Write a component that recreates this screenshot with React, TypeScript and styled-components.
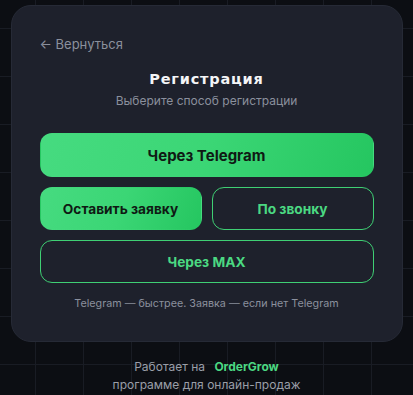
import styled, { createGlobalStyle } from "styled-components";

const GlobalStyle = createGlobalStyle`
  html, body {
    margin: 0;
    padding: 0;
    background-color: #0c0e13;
    background-image:
      linear-gradient(to right, #191c24 1px, transparent 1px),
      linear-gradient(to bottom, #191c24 1px, transparent 1px);
    background-size: 48px 48px;
    background-position: 35px 28px;
    font-family: Inter, "Noto Sans", sans-serif;
    min-height: 395px;
  }
`;

const Page = styled.div`
  display: flex;
  flex-direction: column;
  align-items: center;
  padding-top: 5px;
`;

const Card = styled.div`
  box-sizing: border-box;
  width: 392px;
  background: #1e212c;
  border: 1px solid #262a36;
  border-radius: 20px;
  padding: 30px 28px 30px 28px;
  display: flex;
  flex-direction: column;
`;

const Back = styled.a`
  color: #8b909d;
  font-size: 13px;
  text-decoration: none;
  line-height: 16px;
  align-self: flex-start;
`;

const Title = styled.h1`
  margin: 18px 0 0;
  text-align: center;
  color: #f4f5f7;
  font-family: "DejaVu Sans", sans-serif;
  font-weight: 700;
  font-size: 14.5px;
  line-height: 18px;
  letter-spacing: 0.8px;
`;

const Subtitle = styled.p`
  margin: 6px 0 0;
  text-align: center;
  color: #8b909d;
  font-size: 12px;
  line-height: 14px;
`;

const Buttons = styled.div`
  margin-top: 25px;
  display: grid;
  grid-template-columns: 1fr 1fr;
  gap: 10px;
`;

const Button = styled.button<{
  $variant: "solid" | "outline";
  $wide?: boolean;
  $primary?: boolean;
}>`
  grid-column: ${(p) => (p.$wide ? "1 / span 2" : "auto")};
  height: ${(p) => (p.$primary ? "44px" : "43px")};
  border-radius: 12px;
  font-family: Inter, "Noto Sans", sans-serif;
  font-weight: 700;
  font-size: ${(p) => (p.$primary ? "15px" : "13.7px")};
  cursor: pointer;
  border: 1px solid
    ${(p) => (p.$variant === "solid" ? "transparent" : "#3fcf74")};
  background: ${(p) =>
    p.$variant === "solid"
      ? "linear-gradient(110deg, #46db80 0%, #3bd675 50%, #25c660 100%)"
      : "transparent"};
  color: ${(p) => (p.$variant === "solid" ? "#0f1a14" : "#4bd982")};
`;

const Hint = styled.p`
  margin: 14px 0 0;
  text-align: center;
  color: #8b909d;
  font-size: 10.75px;
  line-height: 14px;
`;

const Footer = styled.div`
  margin-top: 16px;
  text-align: center;
  color: #9a9ea8;
  font-size: 12px;
  line-height: 18px;
`;

const Brand = styled.span`
  color: #4bd982;
  font-weight: 700;
  margin-left: 6px;
`;

export default function App() {
  return (
    <>
      <GlobalStyle />
      <Page>
        <Card>
          <Back href="#">← Вернуться</Back>
          <Title>Регистрация</Title>
          <Subtitle>Выберите способ регистрации</Subtitle>
          <Buttons>
            <Button $variant="solid" $wide $primary>
              Через Telegram
            </Button>
            <Button $variant="solid">Оставить заявку</Button>
            <Button $variant="outline">По звонку</Button>
            <Button $variant="outline" $wide>
              Через MAX
            </Button>
          </Buttons>
          <Hint>Telegram — быстрее. Заявка — если нет Telegram</Hint>
        </Card>
        <Footer>
          <div>
            Работает на <Brand>OrderGrow</Brand>
          </div>
          <div>программе для онлайн-продаж</div>
        </Footer>
      </Page>
    </>
  );
}
